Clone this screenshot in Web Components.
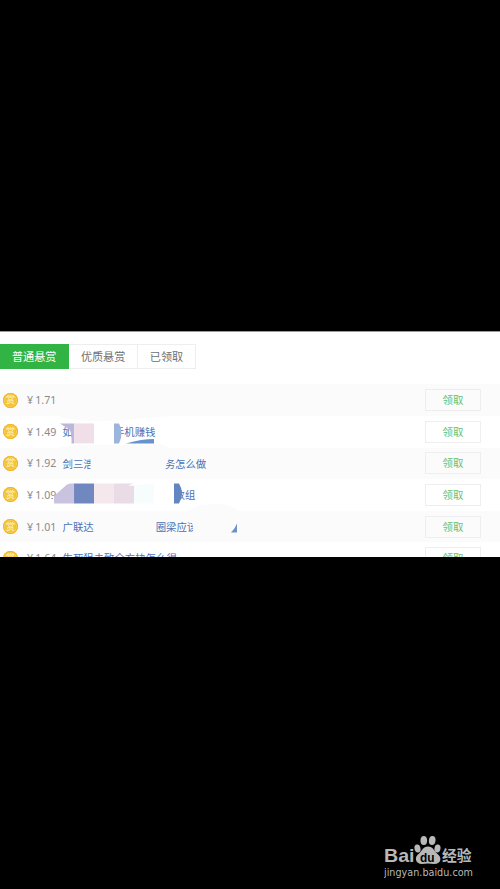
<!DOCTYPE html>
<html lang="zh-CN">
<head>
<meta charset="utf-8">
<title>悬赏</title>
<style>
  body {
    margin: 0;
    background: #000;
    font-family: "Noto Sans", "Noto Sans CJK SC", sans-serif;
  }
</style>
</head>
<body>
<bounty-screen>
  <bounty-tabs slot="panel">
    <bounty-tab active>普通悬赏</bounty-tab>
    <bounty-tab>优质悬赏</bounty-tab>
    <bounty-tab>已领取</bounty-tab>
  </bounty-tabs>
  <bounty-row slot="panel" price="1.71" shaded></bounty-row>
  <bounty-row slot="panel" price="1.49">
    <span>如</span><span style="margin-left:41px">手机赚钱</span>
    <svg slot="cover" viewBox="0 0 500 31.6">
      <path fill="#fbfbfb" d="M58 0H170L110 5Q75 6 58 0Z"/>
      <path fill="#bbb8d8" d="M60 7.4H74V27.4H71.5Q72 13 67 12Z"/>
      <path fill="#f0dfe9" d="M74 7.4H94V27.4H74Z"/>
      <path fill="#fff" d="M94 7.4H114V27.4H94Z"/>
      <path fill="#9bb5dc" d="M114 7.4H119Q124 17 119 27.4H114Z"/>
      <path fill="#6594cd" d="M126 27.4Q142 23 154 23V27.4Z"/>
    </svg>
  </bounty-row>
  <bounty-row slot="panel" price="1.92" shaded>
    <span>剑三浩</span><span style="margin-left:71px">务怎么做</span>
    <svg slot="cover" viewBox="0 0 500 31.6">
      <path fill="#fbfbfb" d="M58 0 74-3H164L169 0Z"/>
      <path fill="#fbfbfb" d="M90.5 2H164L169 11 165 19V26H90.5Z"/>
    </svg>
  </bounty-row>
  <bounty-row slot="panel" price="1.09">
    <span style="margin-left:112px">数组</span>
    <svg slot="cover" viewBox="0 0 500 31.6">
      <path fill="#fff" d="M53 17H58V26H53Z"/>
      <path fill="#c9c3df" d="M54 17 67 5.5 70 4.5H74V24.5H54Z"/>
      <path fill="#7187bf" d="M74 4.5H94V24.5H74Z"/>
      <path fill="#f5e8ed" d="M94 4.5H114V24.5H94Z"/>
      <path fill="#e9dce7" d="M114 4.5H134V24.5H114Z"/>
      <path fill="#f7fdfd" d="M134 4.5H154V24.5H134Z"/>
      <path fill="#fff" d="M128 7 133 4.5 138 3H154L140 6ZM154 4H174V26H154Z"/>
      <path fill="#6286c2" d="M174 4.5H179Q185 14 179 24.5H174Z"/>
    </svg>
  </bounty-row>
  <bounty-row slot="panel" price="1.01" shaded>
    <span>广联达</span><span style="margin-left:62px">圈梁应该</span>
    <svg slot="cover" viewBox="0 0 500 31.6">
      <path fill="#fbfbfb" d="M190 0H240V25H192Q195 16 190 8Z"/>
      <path fill="#fbfbfb" d="M185 4Q192-7 215-7T239 4Z"/>
      <path fill="#6d91c9" d="M231 21.5Q235 18 237 12.5V21.5Z"/>
    </svg>
  </bounty-row>
  <bounty-row slot="panel" price="1.64">
    <span>生死狙击致全方块怎么得</span>
  </bounty-row>
  <baidu-mark slot="mark"></baidu-mark>
</bounty-screen>

<script>
class BountyScreen extends HTMLElement {
  constructor() {
    super();
    this.attachShadow({ mode: 'open' }).innerHTML = `
      <style>
        :host {
          display: flex;
          flex-direction: column;
          height: 889px;
          background: #000;
        }
        .panel {
          margin-top: 331px;
          height: 225px;
          overflow: hidden;
          border-top: 1px solid #999;
          background: #fff;
        }
        .mark {
          display: flex;
          margin: auto 24px 8px auto;
        }
      </style>
      <div class="panel"><slot name="panel"></slot></div>
      <div class="mark"><slot name="mark"></slot></div>
    `;
  }
}

class BountyTabs extends HTMLElement {
  constructor() {
    super();
    this.attachShadow({ mode: 'open' }).innerHTML = `
      <style>
        :host {
          display: flex;
          padding: 12px 0 15.4px;
        }
      </style>
      <slot></slot>
    `;
  }
}

class BountyTab extends HTMLElement {
  constructor() {
    super();
    this.attachShadow({ mode: 'open' }).innerHTML = `
      <style>
        :host {
          display: block;
          box-sizing: border-box;
          height: 25px;
          padding: 0 11.5px 0 12px;
          border: 1px solid #eee;
          border-left: 0;
          color: #707070;
          font-size: 11.1px;
          line-height: 23px;
          white-space: nowrap;
        }
        :host([active]) {
          background: #32b445;
          border-color: #32b445;
          color: #fff;
        }
      </style>
      <slot></slot>
    `;
  }
}

class BountyRow extends HTMLElement {
  constructor() {
    super();
    this.attachShadow({ mode: 'open' });
  }

  connectedCallback() {
    this.shadowRoot.innerHTML = `
      <style>
        :host {
          display: flex;
          position: relative;
          align-items: center;
          box-sizing: border-box;
          height: 31.6px;
          padding: 0 19px 0 3px;
          color: #4a72b9;
          font-size: 10.4px;
          line-height: 16px;
          white-space: nowrap;
        }
        :host([shaded]) { background: #fbfbfb; }
        .coin {
          display: flex;
          align-items: center;
          justify-content: center;
          width: 15px;
          height: 15px;
          border-radius: 50%;
          background: #f4c436;
          box-shadow: inset 0 0 0 1px #efb62a, inset 0 0 0 1.8px #f6cf58;
          color: #fff6d0;
          font-size: 9px;
        }
        .price {
          width: 35.5px;
          margin-left: 9px;
          color: #8a8a8a;
          font-size: 10.6px;
          word-spacing: -0.5px;
        }
        .title { display: flex; flex: 1; padding-top: 0.4px; }
        .take {
          box-sizing: border-box;
          width: 56px;
          height: 22px;
          border: 1px solid #eee;
          color: #62c070;
          line-height: 20px;
          text-align: center;
        }
        /* smears painted over parts of the title */
        ::slotted(svg) {
          position: absolute;
          left: 0;
          top: 0;
          width: 500px;
          height: 31.6px;
          overflow: visible;
        }
      </style>
      <span class="coin">赏</span>
      <span class="price">¥ ${this.getAttribute('price')}</span>
      <span class="title"><slot></slot></span>
      <span class="take">领取</span>
      <slot name="cover"></slot>
    `;
  }
}

class BaiduMark extends HTMLElement {
  constructor() {
    super();
    this.attachShadow({ mode: 'open' }).innerHTML = `
      <style>
        :host { display: block; color: #b8b8b8; }
        svg { display: block; fill: currentColor; }
        text { font-family: "Liberation Sans", sans-serif; font-weight: bold; }
        .cn { font-family: "Noto Sans CJK SC", sans-serif; }
        .url { font-family: "DejaVu Sans", sans-serif; font-weight: normal; }
      </style>
      <svg width="92" height="48" viewBox="0 0 92 48">
        <text x="0" y="29" font-size="19" textLength="30.5" lengthAdjust="spacingAndGlyphs">Bai</text>
        <ellipse cx="33.5" cy="15.5" rx="3" ry="4" transform="rotate(-12 33.5 15.5)"/>
        <ellipse cx="39.8" cy="7.5" rx="3.3" ry="4.5"/>
        <ellipse cx="48.2" cy="7.5" rx="3.3" ry="4.5" transform="rotate(8 48.2 7.5)"/>
        <ellipse cx="53.5" cy="15.5" rx="3" ry="4" transform="rotate(10 53.5 15.5)"/>
        <path d="M44 13.5C39 13.5 38 18 35 20.5C30 24 31 31 38 31Q44 30 50 31C58 31 58 24 53 20.5C50 18 49 13.5 44 13.5Z"/>
        <text x="36" y="28.5" font-size="12" textLength="14.5" lengthAdjust="spacingAndGlyphs" style="fill:#000">du</text>
        <text class="cn" x="58" y="28" font-size="14.8">经验</text>
        <text class="url" x="0" y="42.6" font-size="9.6" textLength="89" lengthAdjust="spacingAndGlyphs">jingyan.baidu.com</text>
      </svg>
    `;
  }
}

customElements.define('bounty-screen', BountyScreen);
customElements.define('bounty-tabs', BountyTabs);
customElements.define('bounty-tab', BountyTab);
customElements.define('bounty-row', BountyRow);
customElements.define('baidu-mark', BaiduMark);
</script>
</body>
</html>
